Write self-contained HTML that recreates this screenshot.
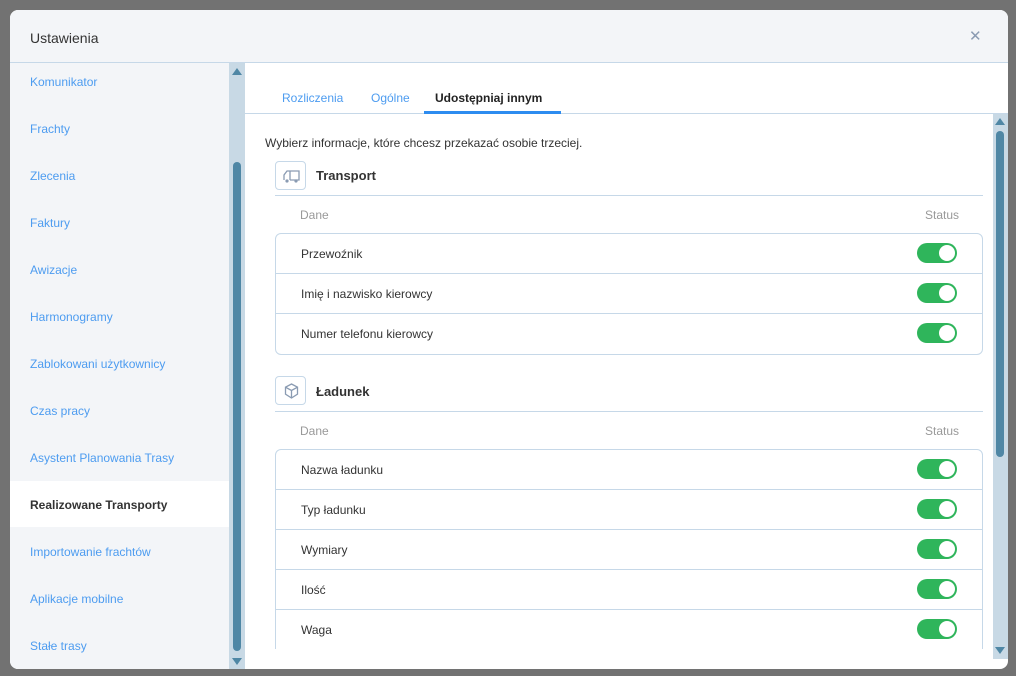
<!DOCTYPE html>
<html><head><meta charset="utf-8"><style>
*{box-sizing:border-box;margin:0;padding:0}
body{width:1016px;height:676px;background:#727272;font-family:"Liberation Sans",sans-serif;font-size:12px;position:relative;overflow:hidden}
.modal{position:absolute;left:10px;top:10px;width:998px;height:659px;background:#fff;border-radius:8px;overflow:hidden}
.hdr{position:absolute;left:0;top:0;width:998px;height:53px;background:#f3f5f8;border-bottom:1px solid #c6d8e8}
.hdr .t{position:absolute;left:20px;top:20px;font-size:14px;color:#333}
.hdr .x{position:absolute;left:959px;top:17px;font-size:15px;color:#8a9bb2}
.side{position:absolute;left:0;top:53px;width:219px;height:606px;background:#f3f5f8}
.side div{position:absolute;left:20px;font-size:12px;color:#4d9cf0}
.side .act{left:0;width:219px;height:46px;background:#fff;color:#333;font-weight:bold;padding:17px 20px}
.sb{position:absolute;left:219px;top:53px;width:16px;height:606px;background:#c8d9e5}
.thumb{position:absolute;background:#4f87a5;border-radius:4px;width:8px;left:4px}
.arr{position:absolute;left:3px;width:0;height:0;border-left:5px solid transparent;border-right:5px solid transparent}
.tabs{position:absolute;left:235px;top:53px;width:763px;height:51px;border-bottom:1px solid #c6d8e8}
.tab{position:absolute;top:28px;font-size:12px;color:#4d9cf0}
.tab.a{color:#222;font-weight:bold}
.ul{position:absolute;left:179px;top:48px;width:137px;height:3px;background:#2d8cf0}
.c{position:absolute;left:235px;top:104px;width:748px;height:535px;overflow:hidden}
.sb2{position:absolute;left:983px;top:104px;width:15px;height:545px;background:#c8d9e5}
.txt{position:absolute;font-size:12px;color:#333}
.icon{position:absolute;width:31px;height:29px;border:1px solid #c6d8e8;border-radius:4px;background:#fff}
.hline{position:absolute;height:1px;background:#c6d8e8}
.tbl{position:absolute;left:30px;width:708px;border:1px solid #c6d8e8;border-radius:6px;background:#fff}
.row{height:40px;border-bottom:1px solid #c6d8e8;position:relative}
.row:last-child{border-bottom:none}
.row span{position:absolute;left:25px;top:13px;color:#333}
.tg{position:absolute;left:641px;top:9px;width:40px;height:20px;border-radius:10px;background:#2fb55b}
.tg::after{content:"";position:absolute;right:2px;top:2px;width:16px;height:16px;border-radius:50%;background:#fff}
.gray{color:#999}
</style></head><body>
<div class="modal">
<div class="hdr"><div class="t">Ustawienia</div><div class="x">✕</div></div>
<div class="side">
<div style="top:12px">Komunikator</div>
<div style="top:59px">Frachty</div>
<div style="top:106px">Zlecenia</div>
<div style="top:153px">Faktury</div>
<div style="top:200px">Awizacje</div>
<div style="top:247px">Harmonogramy</div>
<div style="top:294px">Zablokowani użytkownicy</div>
<div style="top:341px">Czas pracy</div>
<div style="top:388px">Asystent Planowania Trasy</div>
<div class="act" style="top:418px">Realizowane Transporty</div>
<div style="top:482px">Importowanie frachtów</div>
<div style="top:529px">Aplikacje mobilne</div>
<div style="top:576px">Stałe trasy</div>
</div>
<div class="sb"><div class="arr" style="top:5px;border-bottom:7px solid #4f87a5"></div><div class="thumb" style="top:99px;height:489px"></div><div class="arr" style="top:595px;border-top:7px solid #4f87a5"></div></div>
<div class="tabs"><div class="tab" style="left:37px">Rozliczenia</div><div class="tab" style="left:126px">Ogólne</div><div class="tab a" style="left:190px">Udostępniaj innym</div><div class="ul"></div></div>
<div class="c">
<div class="txt" style="left:20px;top:22px">Wybierz informacje, które chcesz przekazać osobie trzeciej.</div>
<div class="icon" style="left:30px;top:47px"><svg width="31" height="29" viewBox="0 0 31 29"><path d="M8 18V13l3-4h3v9M14 9h9v9h-9" fill="none" stroke="#8a9bb2" stroke-width="1.3"/><circle cx="11" cy="19" r="1.6" fill="#8a9bb2"/><circle cx="20" cy="19" r="1.6" fill="#8a9bb2"/></svg></div>
<div class="txt" style="left:71px;top:54px;font-weight:bold;font-size:13px">Transport</div>
<div class="hline" style="left:30px;top:81px;width:708px"></div>
<div class="txt gray" style="left:55px;top:94px">Dane</div>
<div class="txt gray" style="left:680px;top:94px">Status</div>
<div class="tbl" style="top:119px">
<div class="row"><span>Przewoźnik</span><div class="tg"></div></div>
<div class="row"><span>Imię i nazwisko kierowcy</span><div class="tg"></div></div>
<div class="row"><span>Numer telefonu kierowcy</span><div class="tg"></div></div>
</div>
<div class="icon" style="left:30px;top:262px"><svg width="31" height="29" viewBox="0 0 31 29"><path d="M15.5 7l6 3.2v7L15.5 21l-6-3.8v-7zM9.5 10.2l6 3.3 6-3.3M15.5 13.5V21" fill="none" stroke="#8a9bb2" stroke-width="1.3"/></svg></div>
<div class="txt" style="left:71px;top:270px;font-weight:bold;font-size:13px">Ładunek</div>
<div class="hline" style="left:30px;top:297px;width:708px"></div>
<div class="txt gray" style="left:55px;top:310px">Dane</div>
<div class="txt gray" style="left:680px;top:310px">Status</div>
<div class="tbl" style="top:335px;border-radius:6px">
<div class="row"><span>Nazwa ładunku</span><div class="tg"></div></div>
<div class="row"><span>Typ ładunku</span><div class="tg"></div></div>
<div class="row"><span>Wymiary</span><div class="tg"></div></div>
<div class="row"><span>Ilość</span><div class="tg"></div></div>
<div class="row" style="border-bottom:1px solid #c6d8e8"><span>Waga</span><div class="tg"></div></div>
<div class="row"><span>Wartość</span><div class="tg"></div></div>
</div>
</div>
<div class="sb2"><div class="arr" style="top:4px;left:2px;border-bottom:7px solid #4f87a5"></div><div class="thumb" style="top:17px;height:326px;left:3px"></div><div class="arr" style="top:533px;left:2px;border-top:7px solid #4f87a5"></div></div>
</div>
</body></html>
